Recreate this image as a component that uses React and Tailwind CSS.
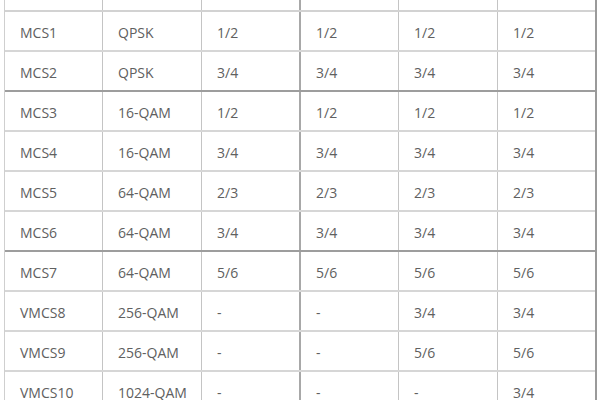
const rows = [
  ['MCS1', 'QPSK', '1/2', '1/2', '1/2', '1/2'],
  ['MCS2', 'QPSK', '3/4', '3/4', '3/4', '3/4'],
  ['MCS3', '16-QAM', '1/2', '1/2', '1/2', '1/2'],
  ['MCS4', '16-QAM', '3/4', '3/4', '3/4', '3/4'],
  ['MCS5', '64-QAM', '2/3', '2/3', '2/3', '2/3'],
  ['MCS6', '64-QAM', '3/4', '3/4', '3/4', '3/4'],
  ['MCS7', '64-QAM', '5/6', '5/6', '5/6', '5/6'],
  ['VMCS8', '256-QAM', '-', '-', '3/4', '3/4'],
  ['VMCS9', '256-QAM', '-', '-', '5/6', '5/6'],
  ['VMCS10', '1024-QAM', '-', '-', '-', '3/4'],
]

// rows after which the divider is heavier
const heavy = [1, 5]

export default function App() {
  return (
    <div className="w-[600px] h-[400px] overflow-hidden bg-white">
      <div
        className="ml-[4px] w-[593px] -mt-[28px] border-l border-r-2 border-l-[#cfcfcf] border-r-[#9a9a9a] text-[14px] text-[#606060]"
        style={{ fontFamily: '"Open Sans", "Noto Sans", sans-serif' }}
      >
        {/* header row, cut off above the picture */}
        <div className="grid grid-cols-[98px_99px_99px_98px_99px_98px] h-[40px] border-b-2 border-[#d2d2d2]">
          {Array.from({ length: 6 }).map((_, i) => (
            <div
              key={i}
              className={
                i === 5
                  ? ''
                  : i === 2
                    ? 'border-r-2 border-[#a8a8a8]'
                    : 'border-r border-[#c4c4c4]'
              }
            />
          ))}
        </div>
        {rows.map((r, ri) => (
          <div
            key={ri}
            className={
              'grid grid-cols-[98px_99px_99px_98px_99px_98px] h-[40px] ' +
              (heavy.includes(ri)
                ? 'border-b-2 border-[#9d9d9d]'
                : 'border-b-2 border-[#d6d6d6]')
            }
          >
            {r.map((c, ci) => (
              <div
                key={ci}
                className={
                  'flex items-center pl-[15px] pt-[2px] ' +
                  (ci === 5
                    ? ''
                    : ci === 2
                      ? 'border-r-2 border-[#a8a8a8]'
                      : 'border-r border-[#c4c4c4]')
                }
              >
                {c}
              </div>
            ))}
          </div>
        ))}
      </div>
    </div>
  )
}
